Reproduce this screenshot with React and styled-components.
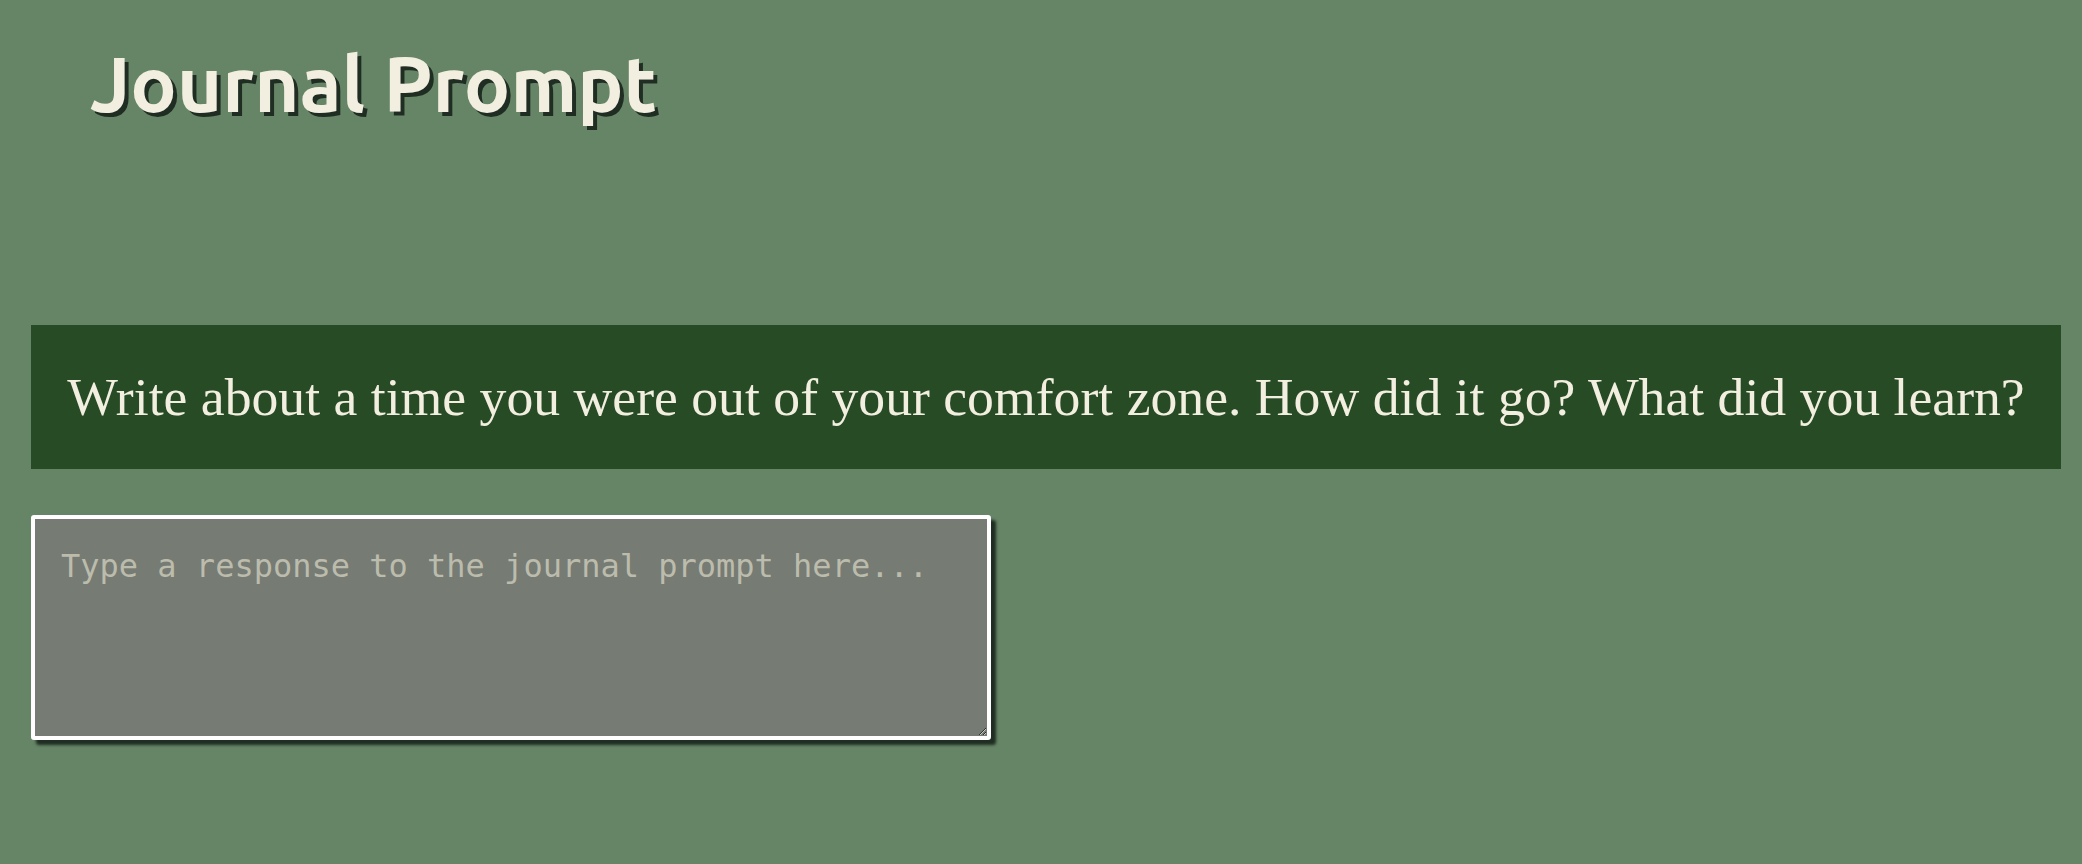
import React from 'react';
import styled, { createGlobalStyle } from 'styled-components';

const GlobalStyle = createGlobalStyle`
    html, body {
        margin: 0;
        padding: 0;
        background-color: #668566;
    }

    #root {
        min-height: 100vh;
    }
`;

const Page = styled.div`
    display: flex;
    flex-direction: column;
    padding: 0 21px 0 31px;
    min-height: 864px;
    box-sizing: border-box;
`;

const Title = styled.h1`
    margin: 40px 0 0 59px;
    font-family: 'Ubuntu', 'Open Sans', 'Noto Sans', sans-serif;
    font-weight: 700;
    font-size: 77.5px;
    color: #f3efe0;
    text-shadow: 4px 4px 0 #1f2d22;
`;

const PromptBanner = styled.div`
    margin-top: 198px;
    height: 144px;
    display: flex;
    align-items: center;
    justify-content: center;
    background-color: #274b25;

    p {
        margin: 0;
        font-family: 'Liberation Serif', serif;
        font-size: 53.7px;
        color: #f3efe0;
    }
`;

const Response = styled.textarea`
    margin-top: 46px;
    width: 960px;
    height: 225px;
    box-sizing: border-box;
    padding: 28px 26px;
    border: 4px solid #ffffff;
    border-radius: 3px;
    background-color: #767b74;
    box-shadow: 5px 5px 3px #1f2d22;
    font-family: 'DejaVu Sans Mono', monospace;
    font-size: 32px;
    color: #f3efe0;
    outline: none;

    &::placeholder {
        color: #bcbcad;
        opacity: 1;
    }
`;

const App = () => {
    return (
        <>
            <GlobalStyle />
            <Page>
                <Title>Journal Prompt</Title>
                <PromptBanner>
                    <p>Write about a time you were out of your comfort zone. How did it go? What did you learn?</p>
                </PromptBanner>
                <div>
                    <Response placeholder='Type a response to the journal prompt here...' />
                </div>
            </Page>
        </>
    );
};

export default App;
